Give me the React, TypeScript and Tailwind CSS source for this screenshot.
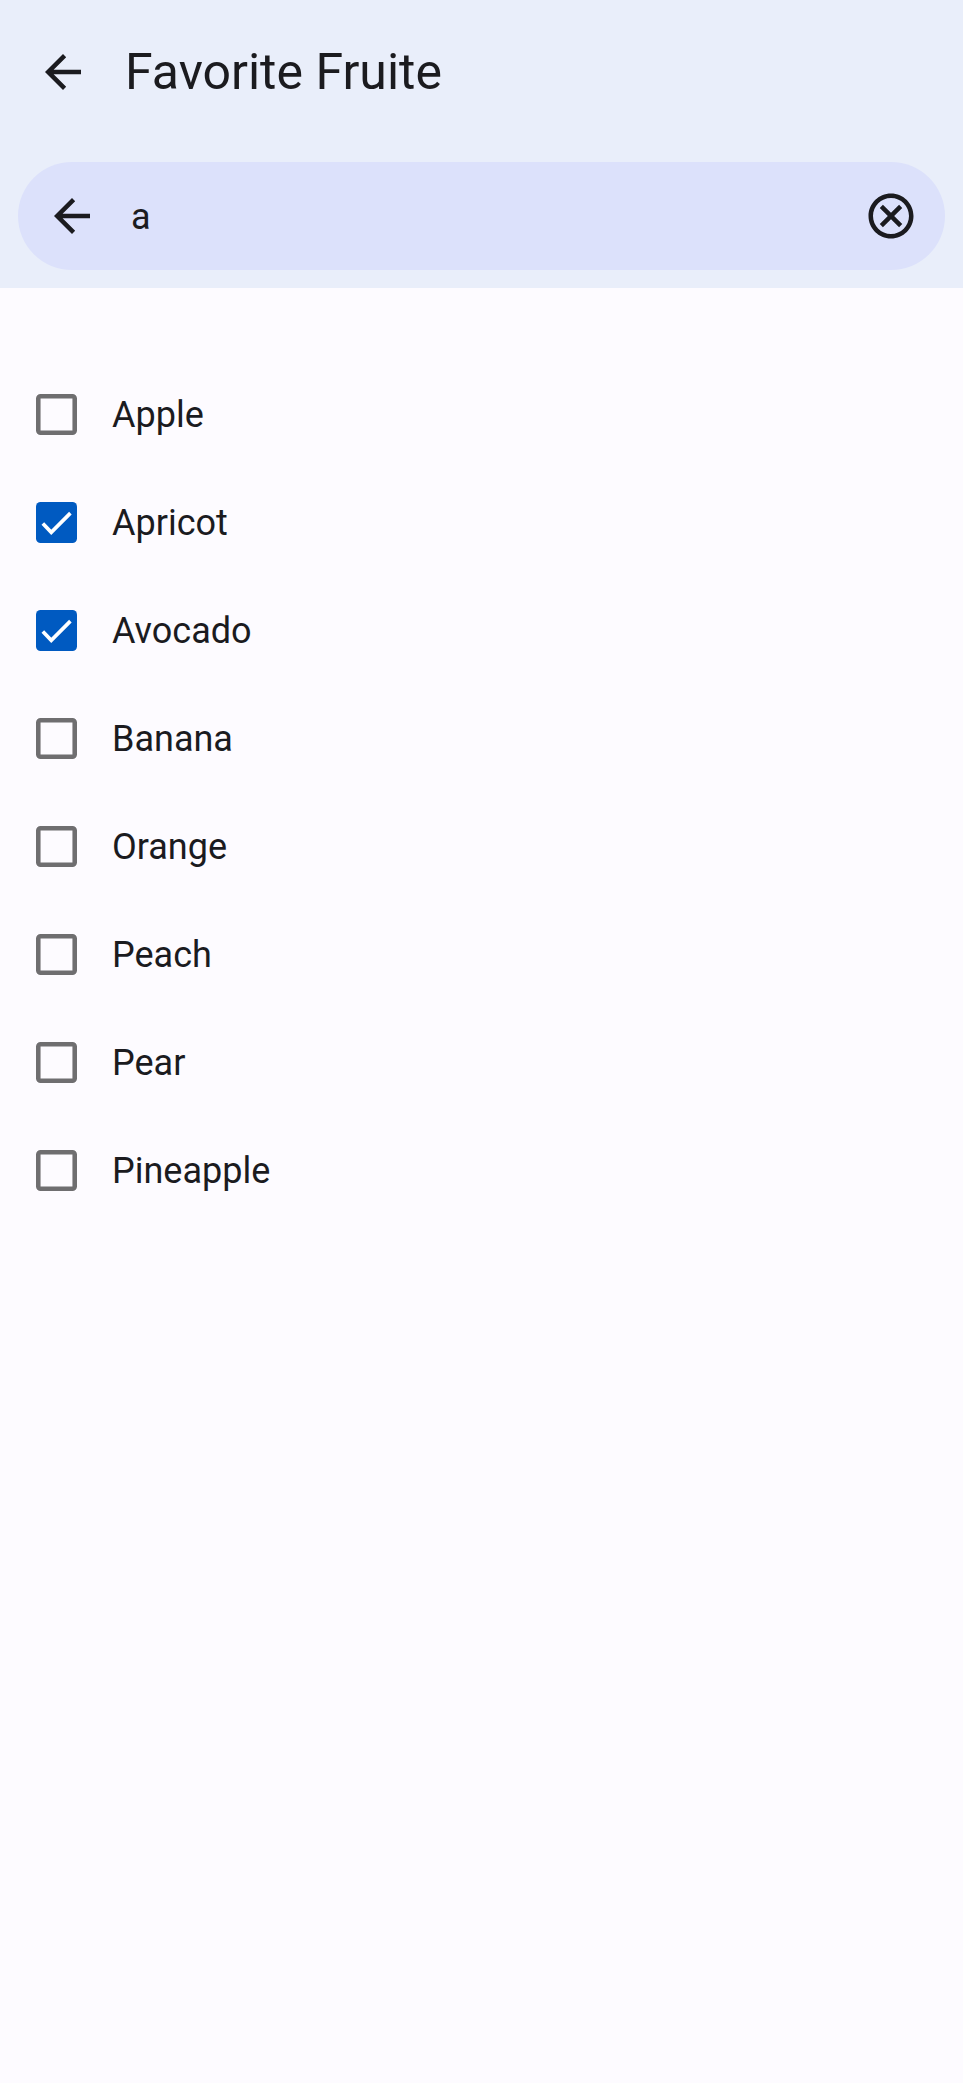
import { useState } from "react";

const fruits = ["Apple", "Apricot", "Avocado", "Banana", "Orange", "Peach", "Pear", "Pineapple"];

function ArrowBack() {
  return (
    <svg viewBox="0 0 24 24" className="size-[54px]" fill="currentColor" aria-hidden="true">
      <path d="M20 11H7.83l5.59-5.59L12 4l-8 8 8 8 1.41-1.41L7.83 13H20v-2z" />
    </svg>
  );
}

function Cancel() {
  return (
    <svg viewBox="0 0 24 24" className="size-[54px]" fill="currentColor" aria-hidden="true">
      <path d="M12 2C6.47 2 2 6.47 2 12s4.47 10 10 10 10-4.47 10-10S17.53 2 12 2zm0 18c-4.41 0-8-3.59-8-8s3.59-8 8-8 8 3.59 8 8-3.59 8-8 8zm3.59-13L12 10.59 8.41 7 7 8.41 10.59 12 7 15.59 8.41 17 12 13.41 15.59 17 17 15.59 13.41 12 17 8.41z" />
    </svg>
  );
}

function FruitRow({ name, checked, onToggle }: { name: string; checked: boolean; onToggle: () => void }) {
  return (
    <li>
      <label className="flex h-[108px] cursor-pointer items-center gap-[35px] px-9">
        <span className="grid shrink-0">
          <input
            type="checkbox"
            checked={checked}
            onChange={onToggle}
            className="col-start-1 row-start-1 size-[41px] cursor-pointer appearance-none rounded"
          />
          <svg
            viewBox="0 0 18 18"
            className="pointer-events-none col-start-1 row-start-1 size-[41px]"
            fill="none"
            strokeWidth="2"
            aria-hidden="true"
          >
            {checked ? (
              <>
                <rect width="18" height="18" rx="2" fill="#005ac1" />
                <path d="M3 9.4l3.7 3.9 8.4-8.4" stroke="#ffffff" strokeWidth="1.6" />
              </>
            ) : (
              <rect x="1" y="1" width="16" height="16" rx="1" stroke="#6f6e70" />
            )}
          </svg>
        </span>
        <span className="pt-0.5 text-[36px] leading-[54px]">{name}</span>
      </label>
    </li>
  );
}

export default function App() {
  const [query, setQuery] = useState("a");
  const [selected, setSelected] = useState<string[]>(["Apricot", "Avocado"]);

  const toggle = (name: string) =>
    setSelected((current) =>
      current.includes(name) ? current.filter((item) => item !== name) : [...current, name],
    );

  const matches = fruits.filter((name) => name.toLowerCase().includes(query.toLowerCase()));

  return (
    <div className="min-h-screen bg-[#fdfbff] font-['Roboto',sans-serif] text-[#1b1b1f]">
      <header className="bg-[#e9eefa] pb-[18px]">
        <div className="flex h-36 items-center gap-[35px] px-9">
          <button type="button" aria-label="Back" className="shrink-0">
            <ArrowBack />
          </button>
          <h1 className="text-[50px] leading-[63px]">Favorite Fruite</h1>
        </div>
        <div className="mx-[18px] mt-[18px] flex h-[108px] items-center gap-8 rounded-full bg-[#dce1fb] px-[27px]">
          <button type="button" aria-label="Close search" className="shrink-0">
            <ArrowBack />
          </button>
          <input
            type="text"
            aria-label="Search"
            value={query}
            onChange={(event) => setQuery(event.target.value)}
            className="min-w-0 flex-1 bg-transparent pt-0.5 text-[36px] leading-[54px] outline-none"
          />
          <button type="button" aria-label="Clear" className="shrink-0" onClick={() => setQuery("")}>
            <Cancel />
          </button>
        </div>
      </header>
      <main>
        <ul className="pt-[72px]">
          {matches.map((name) => (
            <FruitRow
              key={name}
              name={name}
              checked={selected.includes(name)}
              onToggle={() => toggle(name)}
            />
          ))}
        </ul>
      </main>
    </div>
  );
}
